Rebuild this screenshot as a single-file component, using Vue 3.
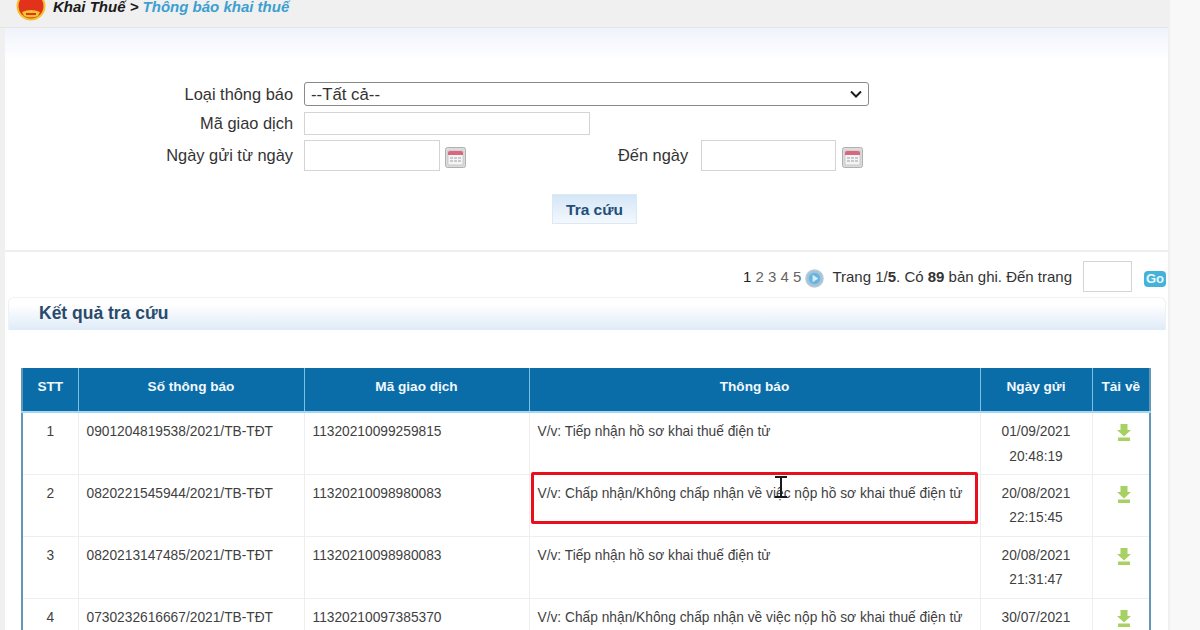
<script setup>
const rows = [
  { stt: 1, so: '0901204819538/2021/TB-TĐT', ma: '11320210099259815', tb: 'V/v: Tiếp nhận hồ sơ khai thuế điện tử', d: '01/09/2021', t: '20:48:19' },
  { stt: 2, so: '0820221545944/2021/TB-TĐT', ma: '11320210098980083', tb: 'V/v: Chấp nhận/Không chấp nhận về việc nộp hồ sơ khai thuế điện tử', d: '20/08/2021', t: '22:15:45' },
  { stt: 3, so: '0820213147485/2021/TB-TĐT', ma: '11320210098980083', tb: 'V/v: Tiếp nhận hồ sơ khai thuế điện tử', d: '20/08/2021', t: '21:31:47' },
  { stt: 4, so: '0730232616667/2021/TB-TĐT', ma: '11320210097385370', tb: 'V/v: Chấp nhận/Không chấp nhận về việc nộp hồ sơ khai thuế điện tử', d: '30/07/2021', t: '23:26:16' },
]
</script>

<template>
  <div class="page">
    <div class="shell">
      <header class="crumb">
        <svg class="emblem" width="30" height="30" viewBox="0 0 30 30">
          <circle cx="15" cy="15" r="14.5" fill="#f2c230" />
          <circle cx="15" cy="15" r="12.5" fill="#e2321c" />
          <path d="M6 21 Q15 17 24 21 L22 25 Q15 28 8 25 Z" fill="#f2c230" />
          <path d="M10 22h10v2H10z" fill="#e2321c" />
        </svg>
        <span class="crumb-text"><b class="crumb-a">Khai Thuế &gt;</b> <b class="crumb-b">Thông báo khai thuế</b></span>
      </header>

      <main class="panel">
        <section class="form">
          <div class="form-row row-1">
            <label class="lbl">Loại thông báo</label>
            <div class="sel-wrap">
              <select class="sel"><option>--Tất cả--</option></select>
              <svg class="chev" width="12" height="8" viewBox="0 0 12 8">
                <path d="M1 1.5l5 5 5-5" fill="none" stroke="#1c1c1c" stroke-width="2" />
              </svg>
            </div>
          </div>
          <div class="form-row row-2">
            <label class="lbl">Mã giao dịch</label>
            <input class="inp inp-code" />
          </div>
          <div class="form-row row-3">
            <label class="lbl">Ngày gửi từ ngày</label>
            <input class="inp inp-date" />
            <svg class="cal cal-1" width="21" height="21" viewBox="0 0 21 21">
              <rect x="0.5" y="0.5" width="20" height="20" rx="2" fill="#dcdcdc" stroke="#b0b0b0" />
              <rect x="3" y="4" width="15" height="14" fill="#f4f4f4" stroke="#b5b5b5" stroke-width="0.6" />
              <path d="M3 8V5.5Q3 4 5 4h11q2 0 2 1.5V8z" fill="#d9667f" />
              <path d="M5 11h3M9 11h3M13 11h3M5 14h3M9 14h3M13 14h3" stroke="#b4bcc0" stroke-width="1.6" />
            </svg>
            <label class="lbl lbl-to">Đến ngày</label>
            <input class="inp inp-date2" />
            <svg class="cal" width="21" height="21" viewBox="0 0 21 21">
              <rect x="0.5" y="0.5" width="20" height="20" rx="2" fill="#dcdcdc" stroke="#b0b0b0" />
              <rect x="3" y="4" width="15" height="14" fill="#f4f4f4" stroke="#b5b5b5" stroke-width="0.6" />
              <path d="M3 8V5.5Q3 4 5 4h11q2 0 2 1.5V8z" fill="#d9667f" />
              <path d="M5 11h3M9 11h3M13 11h3M5 14h3M9 14h3M13 14h3" stroke="#b4bcc0" stroke-width="1.6" />
            </svg>
          </div>
          <div class="btn-row"><button class="btn">Tra cứu</button></div>
        </section>

        <div class="pager">
          <span class="pages"><span class="cur">1</span> 2 3 4 5</span>
          <svg class="next" width="19" height="19" viewBox="0 0 20 20">
            <circle cx="10" cy="10" r="9" fill="#9cc7e0" stroke="#bcc8d0" stroke-width="1.5" />
            <circle cx="10" cy="10" r="6" fill="#6bb3db" />
            <path d="M8 6l6 4-6 4z" fill="#d5ecf7" />
          </svg>
          <span class="pinfo">Trang 1/<b>5</b>. Có <b>89</b> bản ghi. Đến trang</span>
          <input class="inp inp-page" />
          <span class="go">Go</span>
        </div>

        <div class="bar"><h2 class="bar-title">Kết quả tra cứu</h2></div>

        <div class="table-wrap">
          <table class="tbl">
            <colgroup>
              <col class="w1" /><col class="w2" /><col class="w3" />
              <col class="w4" /><col class="w5" /><col class="w6" />
            </colgroup>
            <thead>
              <tr>
                <th>STT</th><th>Số thông báo</th><th>Mã giao dịch</th><th>Thông báo</th><th>Ngày gửi</th><th>Tải về</th>
              </tr>
            </thead>
            <tbody>
              <tr v-for="r in rows" :key="r.stt">
                <td class="c">{{ r.stt }}</td>
                <td>{{ r.so }}</td>
                <td>{{ r.ma }}</td>
                <td>{{ r.tb }}</td>
                <td class="c">{{ r.d }}<br />{{ r.t }}</td>
                <td class="c">
                  <svg class="dl" width="14" height="17" viewBox="0 0 14 17">
                    <path d="M3.5 0h7v6H14l-7 6.5L0 6h3.5z" fill="#a8d163" />
                    <rect x="1" y="13.5" width="12" height="3.5" fill="#a8d163" />
                  </svg>
                </td>
              </tr>
            </tbody>
          </table>
          <div class="redbox"></div>
          <svg class="ibeam" width="14" height="22" viewBox="0 0 14 22">
            <path d="M1 1h12M7 1v20M1 21h12" fill="none" stroke="#1a1a1a" stroke-width="2" />
          </svg>
        </div>
      </main>
    </div>
  </div>
</template>

<style>
html, body { margin: 0; background: #f8f8f8; }
</style>

<style scoped>
.page {
  width: 1200px;
  height: 630px;
  overflow: hidden;
  background: #f8f8f8;
  font-family: "Liberation Sans", Arial, sans-serif;
  color: #333;
}
.shell {
  width: 1170px;
  height: 630px;
  box-sizing: border-box;
  background: #f0f0f0;
  padding: 0 2px 0 5px;
  display: flex;
  flex-direction: column;
}
.crumb {
  height: 28px;
  flex: none;
  margin-left: -5px;
  padding-left: 16px;
  display: flex;
  align-items: flex-end;
  padding-bottom: 7px;
  box-sizing: border-box;
  overflow: hidden;
  border-bottom: 1px solid #e4e4e4;
  position: relative;
}
.emblem { flex: none; margin-right: 7px; margin-bottom: -1px; }
.crumb-text { font-size: 15px; font-style: italic; line-height: 16px; white-space: nowrap; margin-bottom: 5px; }
.crumb-a { color: #1a1a1a; }
.crumb-b { color: #3c9fd0; }
.panel {
  flex: 1;
  background: linear-gradient(#eff3fb 0, #fff 32px);
  display: flex;
  flex-direction: column;
  min-height: 0;
}
.form { padding-top: 54px; height: 224px; flex: none; box-sizing: border-box; border-bottom: 2px solid #eee; }
.form-row { display: flex; align-items: center; }
.row-1 { height: 24px; }
.row-2 { height: 23px; margin-top: 6px; }
.row-3 { height: 31px; margin-top: 5px; }
.lbl { width: 288px; text-align: right; font-size: 16.4px; color: #333; flex: none; }
.sel-wrap { position: relative; margin-left: 11px; width: 565px; height: 24px; }
.sel {
  display: block;
  width: 100%;
  height: 24px;
  appearance: none;
  font: 16.8px "Liberation Sans", Arial, sans-serif;
  color: #333;
  background: #fff;
  border: 1px solid #8a8a8a;
  border-radius: 3px;
  padding: 0 0 0 6px;
}
.chev { position: absolute; right: 7px; top: 8px; pointer-events: none; }
.inp { box-sizing: border-box; border: 1px solid #d4d4d4; background: #fff; margin: 0; padding: 0; display: block; }
.inp-code { margin-left: 11px; width: 286px; height: 23px; }
.inp-date { margin-left: 11px; width: 136px; height: 31px; }
.cal { flex: none; margin-left: 6px; margin-top: 4px; }
.cal-1 { margin-left: 5px; }
.lbl-to { width: auto; margin-left: 152px; }
.inp-date2 { margin-left: 13px; width: 135px; height: 31px; }
.btn-row { padding-top: 23px; padding-left: 547px; }
.btn {
  width: 85px;
  height: 30px;
  border: 1px solid #dce8f4;
  background: linear-gradient(#d4e6f7, #f3f8fd);
  font: bold 15.5px "Liberation Sans", Arial, sans-serif;
  color: #1f4e79;
  padding: 2px 0 0;
}
.pager {
  height: 45px;
  flex: none;
  display: flex;
  align-items: center;
  padding-left: 738px;
  padding-top: 3px;
  box-sizing: border-box;
  font-size: 15px;
  color: #333;
  white-space: nowrap;
  position: relative;
}
.pages { color: #666; font-size: 15px; }
.cur { color: #222; }
.next { flex: none; margin-left: 4px; margin-top: 4px; }
.pinfo { margin-left: 8px; }
.inp-page { margin-left: 11px; width: 49px; height: 31px; flex: none; }
.go {
  margin-left: 12px;
  width: 22px;
  height: 16px;
  margin-top: 6px;
  border-radius: 4px;
  background: #45b3d9;
  color: #e8f8fd;
  font-size: 13px;
  font-weight: bold;
  line-height: 16px;
  text-align: center;
  flex: none;
}
.bar {
  height: 33px;
  flex: none;
  margin: 0 2px 0 3px;
  box-sizing: border-box;
  border: 1px solid #eef2f7;
  border-bottom: none;
  border-radius: 6px 6px 0 0;
  background: linear-gradient(#fff 20%, #dfebf8);
  padding-left: 30px;
}
.bar-title {
  margin: 0;
  font-size: 17.5px;
  line-height: 30px;
  font-weight: bold;
  color: #2a4a6b;
}
.table-wrap {
  margin-top: 38px;
  margin-left: 16px;
  position: relative;
  flex: 1;
  min-height: 0;
  overflow: hidden;
  margin-right: 16px;
}
.tbl {
  table-layout: fixed;
  border-collapse: collapse;
  width: 1128px;
  font-size: 13.75px;
  color: #3f3f3f;
  border-left: 2px solid #6397b8;
  border-right: 2px solid #6397b8;
}
.w1 { width: 56px; }
.w2 { width: 226px; }
.w3 { width: 225px; }
.w4 { width: 451px; }
.w5 { width: 112px; }
.w6 { width: 58px; }
.tbl th {
  height: 44px;
  box-sizing: border-box;
  background: #0a6da8;
  color: #f2f8fc;
  font-size: 13.6px;
  font-weight: bold;
  border-left: 1px solid #7cc0e2;
  border-right: 1px solid #7cc0e2;
  border-bottom: 2px solid #a5d8f0;
  padding: 0 0 6px;
}
.tbl td {
  height: 62px;
  box-sizing: border-box;
  border: 1px solid #eeeeee;
  vertical-align: top;
  padding: 7px 8px 0;
  line-height: 24.5px;
  white-space: nowrap;
}
.tbl td.c { text-align: center; }
.dl { display: block; margin: 4px auto 0; position: relative; left: 3px; }
.redbox {
  position: absolute;
  left: 510px;
  top: 104px;
  width: 447px;
  height: 52px;
  box-sizing: border-box;
  border: 3px solid #e8101c;
  border-radius: 2px;
  pointer-events: none;
}
.ibeam { position: absolute; left: 753px; top: 108px; }
</style>
